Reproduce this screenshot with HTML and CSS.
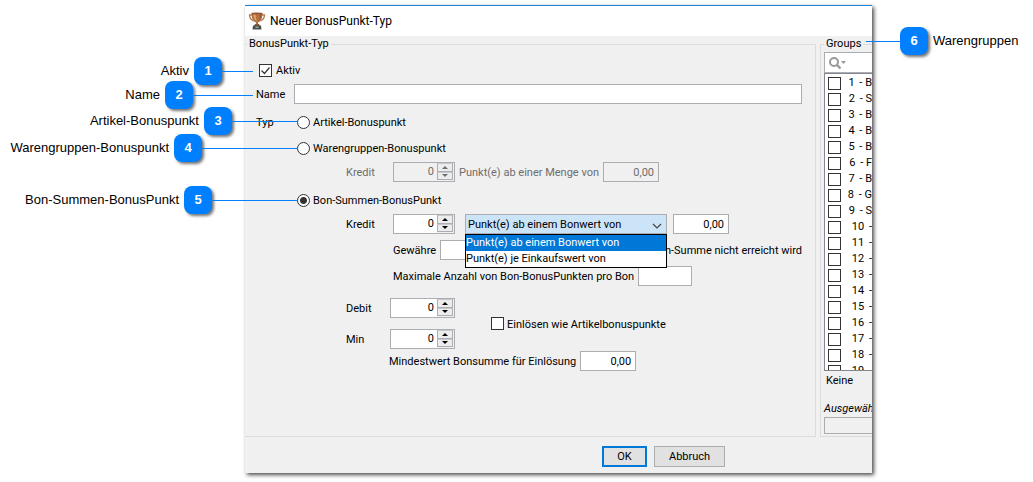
FILE: index.html
```html
<!DOCTYPE html>
<html lang="de">
<head>
  <meta charset="UTF-8" />
  <title>Neuer BonusPunkt-Typ</title>
  <meta name="viewport" content="width=device-width, initial-scale=1.0" />
  <link rel="stylesheet" href="styles.css">
</head>
<body>
  <div class="page">
    <!-- Callouts on the left -->
    <div class="callouts">
      <div class="callout to-edge">Aktiv <b class="badge">1</b><span class="line short"></span></div>
      <div class="callout to-edge">Name <b class="badge">2</b><span class="line medium"></span></div>
      <div class="callout tall">Artikel-Bonuspunkt <b class="badge">3</b><span class="line middle"></span></div>
      <div class="callout">Warengruppen-Bonuspunkt <b class="badge">4</b><span class="line long"></span></div>
      <div class="callout last">Bon-Summen-BonusPunkt <b class="badge">5</b><span class="line wide"></span></div>
    </div>

    <div class="dialog">
      <div class="titlebar">
        <svg class="trophy" width="18" height="18" viewBox="0 0 18 18">
          <path d="M4 3H1.500c0 3 1.500 5 4.500 6M14 3h2.500c0 3-1.500 5-4.500 6" fill="none" stroke="#b9794c" stroke-width="1.300"/>
          <path d="M3.500 1h11c0 5-1.500 8.500-4.500 9.500v2.500H8v-2.500C5 9.500 3.500 6 3.500 1z" fill="#b5713f"/>
          <path d="M5.500 2h2c0 3 .5 5.500 1.500 7.500C6.800 8 5.500 5.500 5.500 2z" fill="#e0ab7c"/>
          <path d="M12 2h1.500c-.2 3-1 5-2.500 6.500.8-2 1-4 1-6.500z" fill="#8f5430"/>
          <ellipse cx="9" cy="1.500" rx="5.500" ry="1" fill="#94582f"/>
          <path d="M7 12h4l1 2H6z" fill="#8f5733"/>
          <path d="M5 13.500h8l.5 4h-9z" fill="#46504c"/>
          <path d="M7.500 14.500h3V16h-3z" fill="#9aa39c"/>
        </svg>
        <span>Neuer BonusPunkt-Typ</span>
      </div>

      <div class="panels">
        <fieldset class="group main">
          <legend>BonusPunkt-Typ</legend>

          <div class="row active-row">
            <input type="checkbox" class="check" id="aktiv" checked>
            <label for="aktiv">Aktiv</label>
          </div>
          <div class="row name-row">
            <label class="side" for="name">Name</label>
            <input type="text" class="field grow" id="name">
          </div>

          <div class="type" role="radiogroup" aria-labelledby="typ">
            <div class="side row"><span id="typ">Typ</span></div>
            <div class="options">
              <div class="row">
                <input type="radio" class="radio" name="typ" id="artikel">
                <label for="artikel">Artikel-Bonuspunkt</label>
              </div>
              <div class="row spaced">
                <input type="radio" class="radio" name="typ" id="waren">
                <label for="waren">Warengruppen-Bonuspunkt</label>
              </div>
              <div class="row sub disabled">
                <label class="caption" for="kredit1">Kredit</label>
                <div class="spinner">
                  <input type="text" id="kredit1" value="0" disabled>
                  <div class="arrows"><button type="button" class="up" aria-label="+" disabled></button><button type="button" class="down" aria-label="-" disabled></button></div>
                </div>
                <label class="between" for="menge">Punkt(e) ab einer Menge von</label>
                <input type="text" class="field amount" id="menge" value="0,00" disabled>
              </div>

              <div class="row section">
                <input type="radio" class="radio" name="typ" id="summen" checked>
                <label for="summen">Bon-Summen-BonusPunkt</label>
              </div>
              <div class="row sub">
                <label class="caption" for="kredit2">Kredit</label>
                <div class="spinner">
                  <input type="text" id="kredit2" value="0">
                  <div class="arrows"><button type="button" class="up" aria-label="+"></button><button type="button" class="down" aria-label="-"></button></div>
                </div>
                <div class="combo">
                  <select aria-label="Kredit">
                    <option>Punkt(e) ab einem Bonwert von</option>
                    <option>Punkt(e) je Einkaufswert von</option>
                  </select>
                  <svg class="chevron" width="10" height="6" viewBox="0 0 10 6"><path d="M1 1l4 4 4-4" fill="none" stroke="#444" stroke-width="1.200"/></svg>
                  <ul class="popup">
                    <li class="selected">Punkt(e) ab einem Bonwert von</li>
                    <li>Punkt(e) je Einkaufswert von</li>
                  </ul>
                </div>
                <input type="text" class="field amount" aria-label="Bonwert" value="0,00">
              </div>
              <div class="row inner spaced">
                <label for="gewaehre">Gewähre</label>
                <input type="text" class="field small" id="gewaehre">
                <span class="tail">Bon-Summe nicht erreicht wird</span>
              </div>
              <div class="row inner spaced">
                <label for="maximal">Maximale Anzahl von Bon-BonusPunkten pro Bon</label>
                <input type="text" class="field small" id="maximal">
              </div>

              <div class="redeem">
                <div class="limits">
                  <div class="row">
                    <label class="caption" for="debit">Debit</label>
                    <div class="spinner">
                      <input type="text" id="debit" value="0">
                      <div class="arrows"><button type="button" class="up" aria-label="+"></button><button type="button" class="down" aria-label="-"></button></div>
                    </div>
                  </div>
                  <div class="row">
                    <label class="caption" for="min">Min</label>
                    <div class="spinner">
                      <input type="text" id="min" value="0">
                      <div class="arrows"><button type="button" class="up" aria-label="+"></button><button type="button" class="down" aria-label="-"></button></div>
                    </div>
                  </div>
                </div>
                <div class="row">
                  <input type="checkbox" class="check" id="einloesen">
                  <label for="einloesen">Einlösen wie Artikelbonuspunkte</label>
                </div>
              </div>
              <div class="row minimum">
                <label for="mindest">Mindestwert Bonsumme für Einlösung</label>
                <input type="text" class="field amount" id="mindest" value="0,00">
              </div>
            </div>
          </div>
        </fieldset>

        <fieldset class="group goods">
          <legend>Groups</legend>
          <div class="search">
            <svg width="20" height="14" viewBox="0 0 20 14"><circle cx="6" cy="6" r="4" fill="none" stroke="#999" stroke-width="2"/><path d="M9 9l3.500 3.500" stroke="#999" stroke-width="2.400"/><path d="M13 5h5l-2.500 3z" fill="#999"/></svg>
            <input type="text" aria-label="Groups">
          </div>
          <div class="list">
            <label><input type="checkbox" class="check"><span class="num">1</span> - B</label>
            <label><input type="checkbox" class="check"><span class="num">2</span> - S</label>
            <label><input type="checkbox" class="check"><span class="num">3</span> - B</label>
            <label><input type="checkbox" class="check"><span class="num">4</span> - B</label>
            <label><input type="checkbox" class="check"><span class="num">5</span> - B</label>
            <label><input type="checkbox" class="check"><span class="num">6</span> - F</label>
            <label><input type="checkbox" class="check"><span class="num">7</span> - B</label>
            <label><input type="checkbox" class="check"><span class="num">8</span> - G</label>
            <label><input type="checkbox" class="check"><span class="num">9</span> - S</label>
            <label><input type="checkbox" class="check"><span class="num">10</span> -</label>
            <label><input type="checkbox" class="check"><span class="num">11</span> -</label>
            <label><input type="checkbox" class="check"><span class="num">12</span> -</label>
            <label><input type="checkbox" class="check"><span class="num">13</span> -</label>
            <label><input type="checkbox" class="check"><span class="num">14</span> -</label>
            <label><input type="checkbox" class="check"><span class="num">15</span> -</label>
            <label><input type="checkbox" class="check"><span class="num">16</span> -</label>
            <label><input type="checkbox" class="check"><span class="num">17</span> -</label>
            <label><input type="checkbox" class="check"><span class="num">18</span> -</label>
            <label><input type="checkbox" class="check"><span class="num">19</span> -</label>
          </div>
          <div class="none">Keine</div>
          <label class="chosen" for="chosen">Ausgewählt</label>
          <input type="text" class="field chosen-field" id="chosen" disabled>
        </fieldset>
      </div>

      <div class="buttons">
        <button type="button" class="btn primary">OK</button>
        <button type="button" class="btn">Abbruch</button>
      </div>
    </div>

    <div class="callouts right">
      <div class="callout"><span class="line short"></span><b class="badge">6</b> Warengruppen</div>
    </div>
  </div>
</body>
</html>
```

FILE: styles.css
```css
:root {
  --face: #f0f0f0;
  --blue: #007fff;
  --accent: #0078d7;
  --border: #abadb3;
  --etch: #dcdcdc;
  --muted: #6d6d6d;
}
* {
  box-sizing: border-box;
}
body {
  margin: 0;
  background: #fff;
  color: #000;
  font-family: Roboto, Tahoma, sans-serif;
  font-size: 11px;
  line-height: 16px;
}
input, select, button {
  font: inherit;
  color: inherit;
  margin: 0;
  border-radius: 0;
}
.page {
  display: flex;
  align-items: flex-start;
  padding: 5px 0 8px;
}

/* callouts */
.callouts {
  flex: 0 0 245px;
  padding-top: 54px;
  position: relative;
  z-index: 2;
  font-family: "Liberation Sans", Arial, sans-serif;
  font-size: 13px;
  pointer-events: none;
}
.callout {
  display: flex;
  align-items: center;
  justify-content: flex-end;
  gap: 5px;
  height: 26px;
  margin-right: -52px;
  white-space: nowrap;
}
.callout.to-edge {
  height: 24px;
  margin-right: -8px;
}
.callout.tall {
  height: 28px;
}
.callout.last {
  margin-top: 26px;
}
.badge {
  width: 28px;
  height: 28px;
  border-radius: 8px;
  background: var(--blue);
  color: #fff;
  line-height: 28px;
  text-align: center;
  box-shadow: 2px 2px 3px rgba(0, 0, 0, 0.55);
}
.line {
  height: 1px;
  margin-left: -5px;
  background: var(--blue);
}
.line.short { width: 31px; }
.line.medium { width: 60px; }
.line.middle { width: 65px; }
.line.wide { width: 85px; }
.line.long { width: 95px; }
.callouts.right {
  flex-basis: 161px;
  padding-top: 23px;
}
.right .callout {
  justify-content: flex-start;
  margin: 0 0 0 -6px;
}
.right .line.short {
  width: 34px;
  margin: 0 -5px 0 0;
}

/* dialog */
.dialog {
  flex: 1;
  min-width: 0;
  background: var(--face);
  border-top: 1px solid #1883d7;
  box-shadow: 2px 2px 4px rgba(0, 0, 0, 0.7);
}
.titlebar {
  display: flex;
  align-items: center;
  gap: 4px;
  height: 30px;
  padding-left: 3px;
  background: #fff;
  font-size: 12px;
}
.panels {
  display: flex;
  gap: 4px;
  overflow: hidden;
}
.group {
  min-width: 0;
  margin: 0;
  border: 1px solid var(--etch);
}
.group legend {
  height: 16px;
  padding: 0 2px;
}
.main {
  flex: 1;
  padding: 8px 13px 0 11px;
  border-left: 0;
}
.main legend {
  margin-left: -9px;
}
.row {
  display: flex;
  align-items: center;
  height: 20px;
  white-space: nowrap;
}
.row > label, .row > span {
  padding-top: 2px;
}
.spaced { margin-top: 6px; }
.section { margin-top: 8px; }
.active-row {
  gap: 4px;
  padding-left: 3px;
}
.name-row {
  margin-top: 4px;
}
.side {
  flex: 0 0 38px;
}
.type {
  display: flex;
  gap: 3px;
  margin-top: 8px;
}
.options {
  flex: 1;
  min-width: 0;
}
.sub {
  margin-top: 4px;
  padding-left: 49px;
}
.sub .caption {
  width: 47px;
}
.sub .spinner {
  width: 62px;
}
.between {
  margin: 0 4px;
}
.inner {
  padding-left: 96px;
  gap: 4px;
}
.tail {
  margin-left: auto;
}
.redeem {
  display: flex;
  align-items: center;
  gap: 36px;
  margin-top: 12px;
  padding-left: 49px;
}
.redeem .caption {
  width: 44px;
}
.limits {
  display: grid;
  gap: 11px;
}
.redeem > .row {
  gap: 3px;
}
.minimum {
  gap: 4px;
  margin-top: 2px;
  padding-left: 92px;
}
.disabled {
  color: var(--muted);
}

/* controls */
.field {
  height: 20px;
  padding: 0 4px;
  border: 1px solid var(--border);
  background: #fff;
}
.field:disabled {
  background: var(--face);
}
.grow {
  flex: 1;
  min-width: 0;
}
.small {
  width: 54px;
}
.amount {
  width: 56px;
  text-align: right;
}
.check, .radio {
  appearance: none;
  flex: none;
  width: 13px;
  height: 13px;
  border: 1px solid #333;
  background: #fff;
}
.check:checked {
  background: #fff url("data:image/svg+xml,%3Csvg xmlns='http://www.w3.org/2000/svg' viewBox='0 0 11 11'%3E%3Cpath d='M1.500 5.500l3 3 5-6' fill='none' stroke='%23333' stroke-width='1.200'/%3E%3C/svg%3E");
}
.radio {
  margin-right: 3px;
  border-radius: 50%;
}
.radio:checked {
  background: radial-gradient(circle, #333 0 3px, #fff 4px);
}
.spinner {
  display: flex;
  width: 65px;
  height: 20px;
  border: 1px solid var(--border);
  background: #fff;
}
.spinner input {
  flex: 1;
  min-width: 0;
  padding: 0 3px 0 0;
  border: 0;
  background: none;
  text-align: right;
}
.arrows {
  display: flex;
  flex-direction: column;
  width: 17px;
  padding: 0 1px 1px 0;
  background: var(--face);
}
.arrows button {
  display: flex;
  flex: 1;
  align-items: center;
  justify-content: center;
  padding: 0;
  border: 1px solid var(--border);
  border-top-color: #c8c8c8;
  background: #ececec;
}
.arrows button::before {
  content: "";
  border: 3px solid transparent;
}
.arrows .up::before {
  border-top: 0;
  border-bottom-color: #000;
}
.arrows .down::before {
  border-bottom: 0;
  border-top-color: #000;
}
.disabled .spinner {
  background: var(--face);
}
.disabled .up::before { border-bottom-color: var(--muted); }
.disabled .down::before { border-top-color: var(--muted); }
.combo {
  position: relative;
  width: 202px;
  height: 20px;
  margin: 0 6px 0 10px;
}
.combo select {
  appearance: none;
  width: 100%;
  height: 20px;
  padding: 1px 2px 0;
  border: 1px solid var(--border);
  background: #cce4f7;
}
.chevron {
  position: absolute;
  right: 5px;
  top: 9px;
}
.popup {
  position: absolute;
  z-index: 1;
  top: 20px;
  left: 0;
  width: 100%;
  margin: 0;
  padding: 0;
  border: 1px solid #000;
  background: #fff;
  list-style: none;
}
.popup .selected {
  background: var(--accent);
  color: #fff;
}

/* goods groups */
.goods {
  flex: 0 0 52px;
  padding: 0 0 2px 3px;
  border-right: 0;
  overflow: hidden;
  white-space: nowrap;
}
.search {
  display: flex;
  align-items: center;
  height: 21px;
  padding-left: 3px;
  border: 1px solid var(--border);
  border-right: 0;
  background: #fff;
}
.search svg {
  flex: none;
}
.search input {
  min-width: 0;
  width: 100%;
  border: 0;
  background: none;
}
.list {
  height: 298px;
  padding: 1px 0 0 3px;
  border: 1px solid #828790;
  border-right: 0;
  background: #fff;
  overflow: hidden;
}
.list label {
  display: flex;
  align-items: center;
  height: 16px;
  white-space: pre;
}
.num {
  width: 25px;
  margin-right: 1px;
  padding-right: 1px;
  text-align: right;
}
.none {
  padding: 2px 0 12px 2px;
}
.chosen {
  display: block;
  font-style: italic;
}
.chosen-field {
  display: block;
  width: 100%;
  height: 17px;
  border-right: 0;
}

.buttons {
  display: flex;
  gap: 7px;
  padding: 9px 0 6px 357px;
}
.btn {
  min-width: 45px;
  height: 21px;
  padding: 0 14px;
  border: 1px solid #adadad;
  background: #e1e1e1;
  line-height: 16px;
}
.btn.primary {
  padding: 0;
  border: 2px solid var(--accent);
}
```
